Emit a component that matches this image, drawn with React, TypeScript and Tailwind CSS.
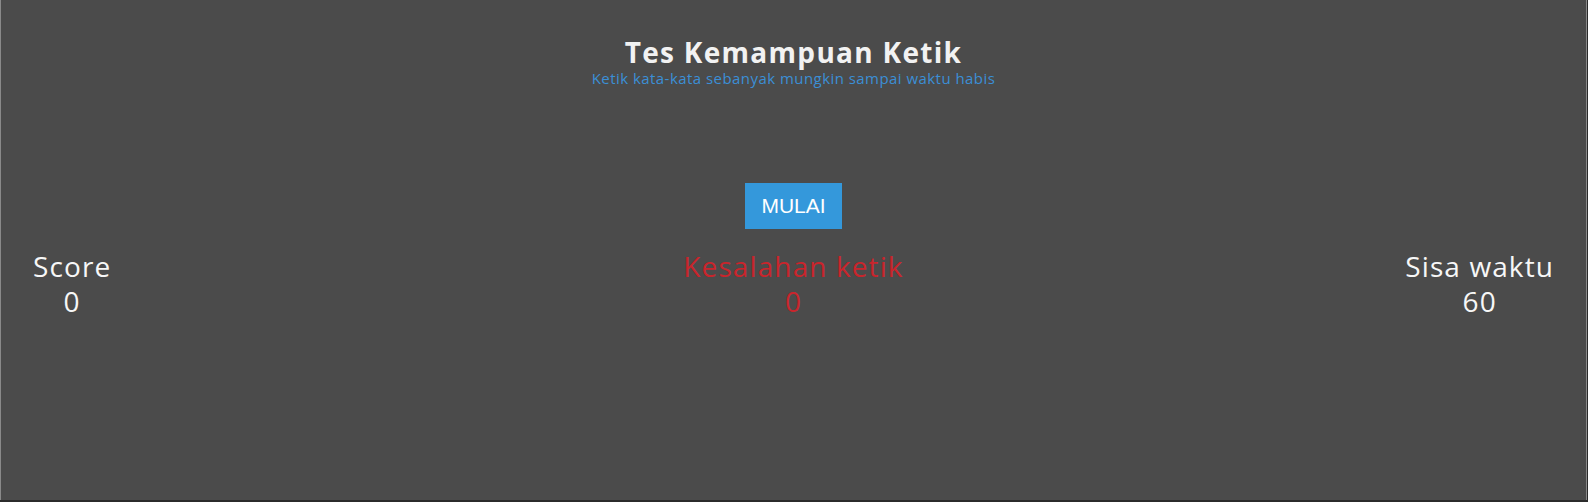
import React from "react";

export default function App() {
  return (
    <div className="w-[1588px] h-[502px] bg-[#2b2b2b]" style={{ fontFamily: "'Open Sans', Lato, sans-serif" }}>
      <div className="w-[1587px] h-[500px] bg-[#4b4b4b] border-l border-r border-[#8a8a8a] flex flex-col items-center">
        <h1 className="mt-[34px] text-[28px] leading-[36px] font-bold tracking-[1.3px] text-[#f2f2f2]">Tes Kemampuan Ketik</h1>
        <p className="text-[15px] leading-[18px] tracking-[0.45px] text-[#3b8fd6] -mt-[1px]">Ketik kata-kata sebanyak mungkin sampai waktu habis</p>
        <button className="mt-[96px] w-[97px] h-[46px] bg-[#3498db] text-white text-[21px]" style={{ fontFamily: "'Liberation Sans', Arial, sans-serif" }}>MULAI</button>
        <div className="w-full grid grid-cols-3 items-start px-[32px] mt-[20px] text-[28px] leading-[35px] font-normal tracking-[1.1px]">
          <div className="justify-self-start flex flex-col items-center text-[#f7f7f7]">
            <span>Score</span>
            <span>0</span>
          </div>
          <div className="justify-self-center flex flex-col items-center text-[#c9252c]">
            <span>Kesalahan ketik</span>
            <span>0</span>
          </div>
          <div className="justify-self-end flex flex-col items-center text-[#f7f7f7]">
            <span>Sisa waktu</span>
            <span>60</span>
          </div>
        </div>
      </div>
    </div>
  );
}
